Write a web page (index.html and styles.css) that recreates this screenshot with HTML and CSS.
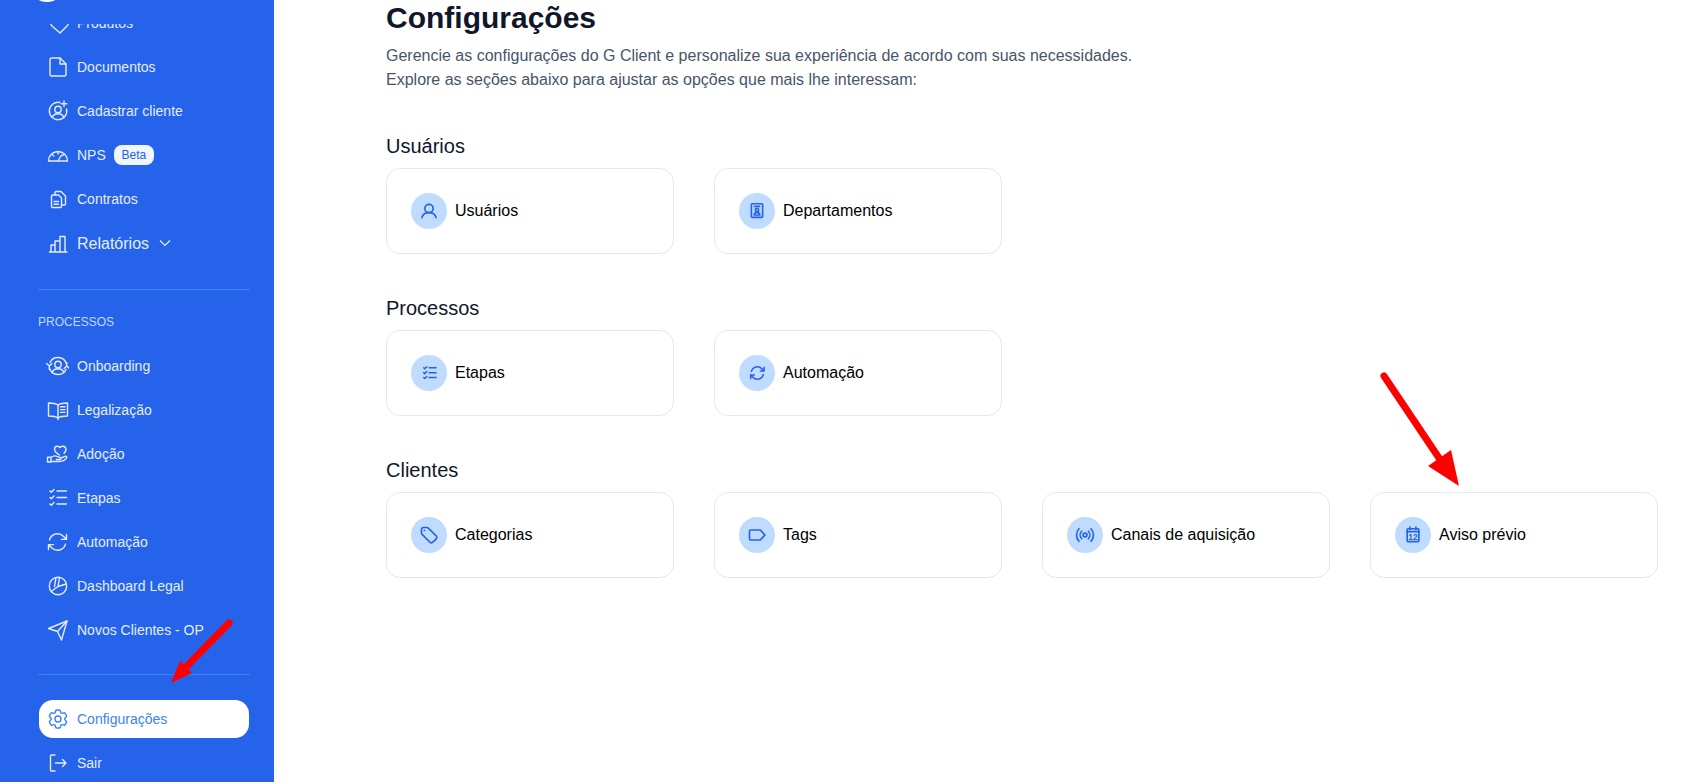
FILE: index.html
```html
<!DOCTYPE html>
<html>
<head>
  <title>Configurações</title>
  <link rel="stylesheet" href="styles.css">
</head>
<body>
  <svg class="sprite" xmlns="http://www.w3.org/2000/svg">
    <symbol id="i-heart" viewBox="0 0 24 24"><path d="M7 15l8 7 7-7c3-3.500 2-10-3-10-2 0-3.200 1-4 2.500C14.200 6 13 5 11 5c-5 0-7 6.500-4 10z"/></symbol>
    <symbol id="i-doc" viewBox="0 0 24 24"><path d="M15 3H6.500A1.500 1.500 0 0 0 5 4.500v15A1.500 1.500 0 0 0 6.500 21h13a1.500 1.500 0 0 0 1.500-1.500V9z"/><path d="M15 3v6h6"/></symbol>
    <symbol id="i-user-plus" viewBox="0 0 24 24"><path d="M15 3.500A8.700 8.700 0 1 0 21.500 10"/><circle cx="13" cy="10.500" r="3.200"/><path d="M7 18.500c1-2.400 3.300-3.800 6-3.800s5 1.400 6 3.800"/><path d="M19 2v5.500M16.300 4.800h5.500"/></symbol>
    <symbol id="i-gauge" viewBox="0 0 24 24"><path d="M3.500 18a9.500 9.500 0 0 1 19 0z"/><path d="M13 18l3.500-6M13 8.500v2.500M7 11.500l1.800 1.500M19 11.500l-1.300 1"/></symbol>
    <symbol id="i-contract" viewBox="0 0 24 24"><path d="M7.500 8h6l3 3v8.500a1 1 0 0 1-1 1h-8a1 1 0 0 1-1-1V9a1 1 0 0 1 1-1z"/><path d="M10 8V5.500a1 1 0 0 1 1-1h5l4.500 4.500v8a1 1 0 0 1-1 1h-3"/><path d="M9 14.500h4.500M9 17.200h4.500"/></symbol>
    <symbol id="i-bars" viewBox="0 0 24 24"><path d="M4.500 21h17.500M6 21v-7h4v7M10 21V10h5v11M15 21V5.500h5V21"/></symbol>
    <symbol id="i-onboard" viewBox="0 0 24 24"><path d="M5 8.500A8.800 8.800 0 0 1 21.300 9.500M21 15.500A8.800 8.800 0 0 1 4.700 14.500"/><circle cx="13" cy="10.500" r="3.200"/><path d="M7 18.500c1-2.400 3.300-3.800 6-3.800s5 1.400 6 3.800"/><path d="M4.300 15.500v-3.700M1.600 9.600l2.700 2.400 2.500-2.400M21.700 8.500v3.700M19.200 14.400l2.500-2.400 2.700 2.400"/></symbol>
    <symbol id="i-book" viewBox="0 0 24 24"><path d="M13 7c-2-1.500-4.500-2-9.500-2v13c5 0 7.500.5 9.500 2 2-1.500 4.500-2 9.500-2V5c-5 0-7.500.5-9.500 2z"/><path d="M13 7v14.500M15.500 8.800h4.500M15.500 11.600h4.500M15.500 14.400h4.500"/></symbol>
    <symbol id="i-hand" viewBox="0 0 24 24"><path d="M14.500 13C11.500 11.200 9.500 9.500 9.500 7.200 9.500 5.500 10.800 4.200 12.400 4.200c1 0 1.800.5 2.400 1.300.6-.8 1.600-1.300 2.700-1.300 2 0 3.500 1.400 3.500 3.300 0 1.400-.8 2.600-2 3.800"/><path d="M2.500 15.200H6V20H2.500zM6 15.500c2-1.700 4-2 6-1.200l3 1c1.200.4 1.200 2.200-.5 2.200h-3.200M6 19.500h8.500c2.500 0 5.500-1.300 7-3.300.8-1.100-.2-2.400-1.600-1.800L16 16"/></symbol>
    <symbol id="i-check" viewBox="0 0 24 24"><path d="M5 5l1.300 1.300L9 3.600M5 11.500l1.300 1.300L9 10.100M5 18l1.300 1.300L9 16.600M12 5h9.500M12 11.500h9.500M12 18h9.500"/></symbol>
    <symbol id="i-sync" viewBox="0 0 24 24"><g transform="translate(.5 0)"><path d="M16.023 9.348h4.992M2.985 19.644v-4.992m0 0h4.992m-4.993 0l3.181 3.183a8.250 8.250 0 0 0 13.803-3.700M4.031 9.865a8.250 8.250 0 0 1 13.803-3.700l3.181 3.182m0-4.991v4.990"/></g></symbol>
    <symbol id="i-pie" viewBox="0 0 24 24"><circle cx="13" cy="12" r="8.700"/><path d="M13 12.500l1.500-9M13 12.500l8.200-2.500M13 12.500l-6.800 5M9.500 12.500L11 3.700"/></symbol>
    <symbol id="i-plane" viewBox="0 0 24 24"><path d="M3.500 10.500L22 3l-5.500 19-4-8.500z"/><path d="M12.500 13.500L22 3"/></symbol>
    <symbol id="i-cog" viewBox="0 0 24 24"><g transform="translate(1 0)"><path d="M9.594 3.940c.09-.542.56-.94 1.110-.94h2.593c.55 0 1.020.398 1.110.94l.213 1.281c.063.374.313.686.645.870.074.04.147.083.22.127.324.196.72.257 1.075.124l1.217-.456a1.125 1.125 0 0 1 1.370.49l1.296 2.247a1.125 1.125 0 0 1-.26 1.431l-1.003.827c-.293.24-.438.613-.431.992a6.759 6.759 0 0 1 0 .255c-.007.378.138.75.43.99l1.005.828c.424.35.534.954.26 1.430l-1.298 2.247a1.125 1.125 0 0 1-1.369.491l-1.217-.456c-.355-.133-.75-.072-1.076.124a6.570 6.570 0 0 1-.22.128c-.331.183-.581.495-.644.869l-.213 1.280c-.09.543-.56.941-1.110.941h-2.594c-.55 0-1.020-.398-1.110-.94l-.213-1.281c-.062-.374-.312-.686-.644-.87a6.520 6.520 0 0 1-.22-.127c-.325-.196-.72-.257-1.076-.124l-1.217.456a1.125 1.125 0 0 1-1.369-.49l-1.297-2.247a1.125 1.125 0 0 1 .26-1.431l1.004-.827c.292-.24.437-.613.43-.992a6.932 6.932 0 0 1 0-.255c.007-.378-.138-.75-.43-.99l-1.004-.828a1.125 1.125 0 0 1-.26-1.430l1.297-2.247a1.125 1.125 0 0 1 1.370-.491l1.216.456c.356.133.751.072 1.076-.124.072-.044.146-.087.22-.128.332-.183.582-.495.644-.869l.214-1.281z"/><circle cx="12" cy="12" r="3"/></g></symbol>
    <symbol id="i-exit" viewBox="0 0 24 24"><path d="M10 4H6.500a1 1 0 0 0-1 1v14a1 1 0 0 0 1 1H10M10.500 12H21M17.500 8.500L21 12l-3.500 3.500"/></symbol>
    <symbol id="i-user" viewBox="0 0 24 24"><circle cx="12" cy="9" r="5"/><path d="M3.500 20c.8-3.500 4-6 8.500-6s7.700 2.500 8.500 6"/></symbol>
    <symbol id="i-badge" viewBox="0 0 24 24"><rect x="5.300" y="3.300" width="13.400" height="16.400" rx="1"/><path d="M9 6.500h6"/><circle cx="12" cy="10.800" r="2"/><path d="M8.500 16.800c.5-2 1.800-3.200 3.500-3.200s3 1.200 3.500 3.200z"/></symbol>
    <symbol id="i-tag" viewBox="0 0 24 24"><path d="M9.568 3H5.250A2.250 2.250 0 0 0 3 5.250v4.318c0 .597.237 1.170.659 1.591l9.581 9.581c.699.699 1.780.872 2.607.330a18.095 18.095 0 0 0 5.223-5.223c.542-.827.369-1.908-.330-2.607L11.160 3.660A2.250 2.250 0 0 0 9.568 3z"/><path d="M6.500 6.500h.01"/></symbol>
    <symbol id="i-label" viewBox="0 0 24 24"><path d="M3 7.500A1.500 1.500 0 0 1 4.500 6H16l5.500 6-5.500 6H4.500A1.500 1.500 0 0 1 3 16.500z"/></symbol>
    <symbol id="i-signal" viewBox="0 0 24 24"><circle cx="12" cy="12" r="2.300"/><path d="M8 7.500a6.500 6.500 0 0 0 0 9M16 7.500a6.500 6.500 0 0 1 0 9M4.800 4.500a11 11 0 0 0 0 15M19.200 4.500a11 11 0 0 1 0 15"/></symbol>
  </svg>

  <div class="layout">
    <aside class="sidebar">
      <div class="logo"><span class="logoCircle"></span></div>

      <div class="navScroll">
        <nav class="navList navFirst">
          <a class="navItem"><svg class="navIcon"><use href="#i-heart"/></svg>Produtos</a>
          <a class="navItem"><svg class="navIcon"><use href="#i-doc"/></svg>Documentos</a>
          <a class="navItem"><svg class="navIcon"><use href="#i-user-plus"/></svg>Cadastrar cliente</a>
          <a class="navItem"><svg class="navIcon"><use href="#i-gauge"/></svg>NPS<span class="beta">Beta</span></a>
          <a class="navItem"><svg class="navIcon"><use href="#i-contract"/></svg>Contratos</a>
          <a class="navItem navBig"><svg class="navIcon"><use href="#i-bars"/></svg><span class="navBigText">Relatórios</span>
            <svg class="chevron" viewBox="0 0 12 8"><path d="M1 1.500l5 5 5-5"/></svg>
          </a>
        </nav>

        <hr class="divider dividerTop">
        <div class="navLabel">PROCESSOS</div>

        <nav class="navList">
          <a class="navItem"><svg class="navIcon"><use href="#i-onboard"/></svg>Onboarding</a>
          <a class="navItem"><svg class="navIcon"><use href="#i-book"/></svg>Legalização</a>
          <a class="navItem"><svg class="navIcon"><use href="#i-hand"/></svg>Adoção</a>
          <a class="navItem"><svg class="navIcon"><use href="#i-check"/></svg>Etapas</a>
          <a class="navItem"><svg class="navIcon"><use href="#i-sync"/></svg>Automação</a>
          <a class="navItem"><svg class="navIcon"><use href="#i-pie"/></svg>Dashboard Legal</a>
          <a class="navItem"><svg class="navIcon"><use href="#i-plane"/></svg>Novos Clientes - OP</a>
        </nav>

        <hr class="divider dividerBottom">

        <nav class="navList">
          <a class="navItem active"><svg class="navIcon"><use href="#i-cog"/></svg>Configurações</a>
          <a class="navItem"><svg class="navIcon"><use href="#i-exit"/></svg>Sair</a>
        </nav>
      </div>
    </aside>

    <main class="content">
      <h1>Configurações</h1>
      <p class="intro">Gerencie as configurações do G Client e personalize sua experiência de acordo com suas necessidades.<br>Explore as seções abaixo para ajustar as opções que mais lhe interessam:</p>

      <section class="group">
        <h2>Usuários</h2>
        <div class="cards">
          <a class="card"><span class="cardIcon"><svg><use href="#i-user"/></svg></span>Usuários</a>
          <a class="card"><span class="cardIcon"><svg><use href="#i-badge"/></svg></span>Departamentos</a>
        </div>
      </section>

      <section class="group">
        <h2>Processos</h2>
        <div class="cards">
          <a class="card"><span class="cardIcon"><svg class="iconSmall"><use href="#i-check"/></svg></span>Etapas</a>
          <a class="card"><span class="cardIcon"><svg class="iconSmall"><use href="#i-sync"/></svg></span>Automação</a>
        </div>
      </section>

      <section class="group">
        <h2>Clientes</h2>
        <div class="cards">
          <a class="card"><span class="cardIcon"><svg><use href="#i-tag"/></svg></span>Categorias</a>
          <a class="card"><span class="cardIcon"><svg><use href="#i-label"/></svg></span>Tags</a>
          <a class="card"><span class="cardIcon"><svg><use href="#i-signal"/></svg></span>Canais de aquisição</a>
          <a class="card"><span class="cardIcon"><svg viewBox="0 0 24 24"><path d="M8.500 2.500v3M15.500 2.500v3"/><rect x="5" y="4.500" width="14" height="15.500" rx="1"/><path d="M5 8h14"/><text class="calDay" x="12" y="17.800">12</text></svg></span>Aviso prévio</a>
        </div>
      </section>
    </main>
  </div>

  <!-- red arrows drawn over the screenshot -->
  <svg class="arrow arrowSidebar" viewBox="0 0 70 75"><line x1="64" y1="8" x2="21" y2="52"/><polygon points="6,68 15,46 27,58"/></svg>
  <svg class="arrow arrowNotice" viewBox="0 0 90 125"><line x1="9" y1="8" x2="64" y2="90"/><polygon points="84,118 76,82 53,98"/></svg>
</body>
</html>
```
FILE: styles.css
```css
* {
  box-sizing: border-box;
}

html,
body {
  margin: 0;
  height: 100%;
  overflow: hidden;
}

body {
  background-color: #ffffff;
  font-family: "Liberation Sans", Arial, sans-serif;
}

.sprite {
  display: none;
}

.layout {
  display: flex;
  height: 782px;
}

/* sidebar */
.sidebar {
  width: 274px;
  flex-shrink: 0;
  background-color: #2563eb;
  color: #e4edff;
  display: flex;
  flex-direction: column;
  overflow: hidden;
}

.logo {
  height: 24px;
  flex-shrink: 0;
  padding-left: 29px;
  overflow: hidden;
}

.logoCircle {
  display: block;
  width: 36px;
  height: 36px;
  margin-top: -34px;
  border-radius: 50%;
  background-color: #ffffff;
}

.navScroll {
  flex: 1;
  overflow: hidden;
  padding: 0 25px 0 39px;
}

.navList {
  display: flex;
  flex-direction: column;
  gap: 6px;
}

.navFirst {
  margin-top: -20px;
}

.navItem {
  display: flex;
  align-items: center;
  gap: 8px;
  height: 38px;
  padding-left: 6px;
  border-radius: 14px;
  font-size: 14px;
}

.navBig {
  font-size: 16px;
}

.navBigText {
  padding-top: 2px;
}

.navIcon {
  width: 24px;
  height: 24px;
  flex-shrink: 0;
  fill: none;
  stroke: currentColor;
  stroke-width: 1.4;
  stroke-linecap: round;
  stroke-linejoin: round;
}

.chevron {
  width: 12px;
  height: 8px;
  margin-left: 2px;
  fill: none;
  stroke: currentColor;
  stroke-width: 1.2;
}

.beta {
  width: 40px;
  height: 20px;
  line-height: 20px;
  text-align: center;
  border-radius: 8px;
  background-color: #eff6ff;
  color: #2563eb;
  font-size: 12px;
}

.active {
  background-color: #ffffff;
  color: #3b82f6;
}

.divider {
  height: 1px;
  margin: 0 -1px;
  border: 0;
  background-color: #3b82f6;
}

.dividerTop {
  margin-top: 27px;
  margin-bottom: 24px;
}

.dividerBottom {
  margin-top: 25px;
  margin-bottom: 25px;
}

.navLabel {
  margin-left: -1px;
  margin-bottom: 17px;
  font-size: 12px;
  line-height: 16px;
  color: #bfdbfe;
}

/* main content */
.content {
  flex: 1;
  padding: 0 36px 0 112px;
}

h1 {
  margin: 0 0 8px;
  font-size: 30px;
  line-height: 36px;
  font-weight: 700;
  color: #0f172a;
}

.intro {
  margin: 0 0 40px;
  font-size: 16px;
  line-height: 24px;
  color: #475569;
}

.group {
  margin-bottom: 40px;
}

h2 {
  margin: 0 0 8px;
  font-size: 20px;
  line-height: 28px;
  font-weight: 400;
  color: #0f172a;
}

.cards {
  display: grid;
  grid-template-columns: repeat(4, 288px);
  gap: 40px;
}

.card {
  display: flex;
  align-items: center;
  gap: 8px;
  padding: 24px;
  border: 1px solid #e2e8f0;
  border-radius: 14px;
  font-size: 16px;
  color: #000000;
}

.cardIcon {
  width: 36px;
  height: 36px;
  display: flex;
  align-items: center;
  justify-content: center;
  border-radius: 50%;
  background-color: #bfdbfe;
}

.cardIcon svg {
  width: 20px;
  height: 20px;
  fill: none;
  stroke: #2563eb;
  stroke-width: 2;
  stroke-linecap: round;
  stroke-linejoin: round;
}

.cardIcon .iconSmall {
  width: 18px;
  height: 18px;
}

.cardIcon .calDay {
  fill: #2563eb;
  stroke: none;
  font-size: 10px;
  font-weight: 700;
  text-anchor: middle;
}

/* annotation arrows */
.arrow {
  position: absolute;
  fill: #ff0000;
  stroke: none;
}

.arrow line {
  stroke: #ff0000;
  stroke-width: 7;
  stroke-linecap: round;
}

.arrowSidebar {
  left: 165px;
  top: 615px;
  width: 70px;
  height: 75px;
}

.arrowNotice {
  left: 1375px;
  top: 368px;
  width: 90px;
  height: 125px;
}
```
